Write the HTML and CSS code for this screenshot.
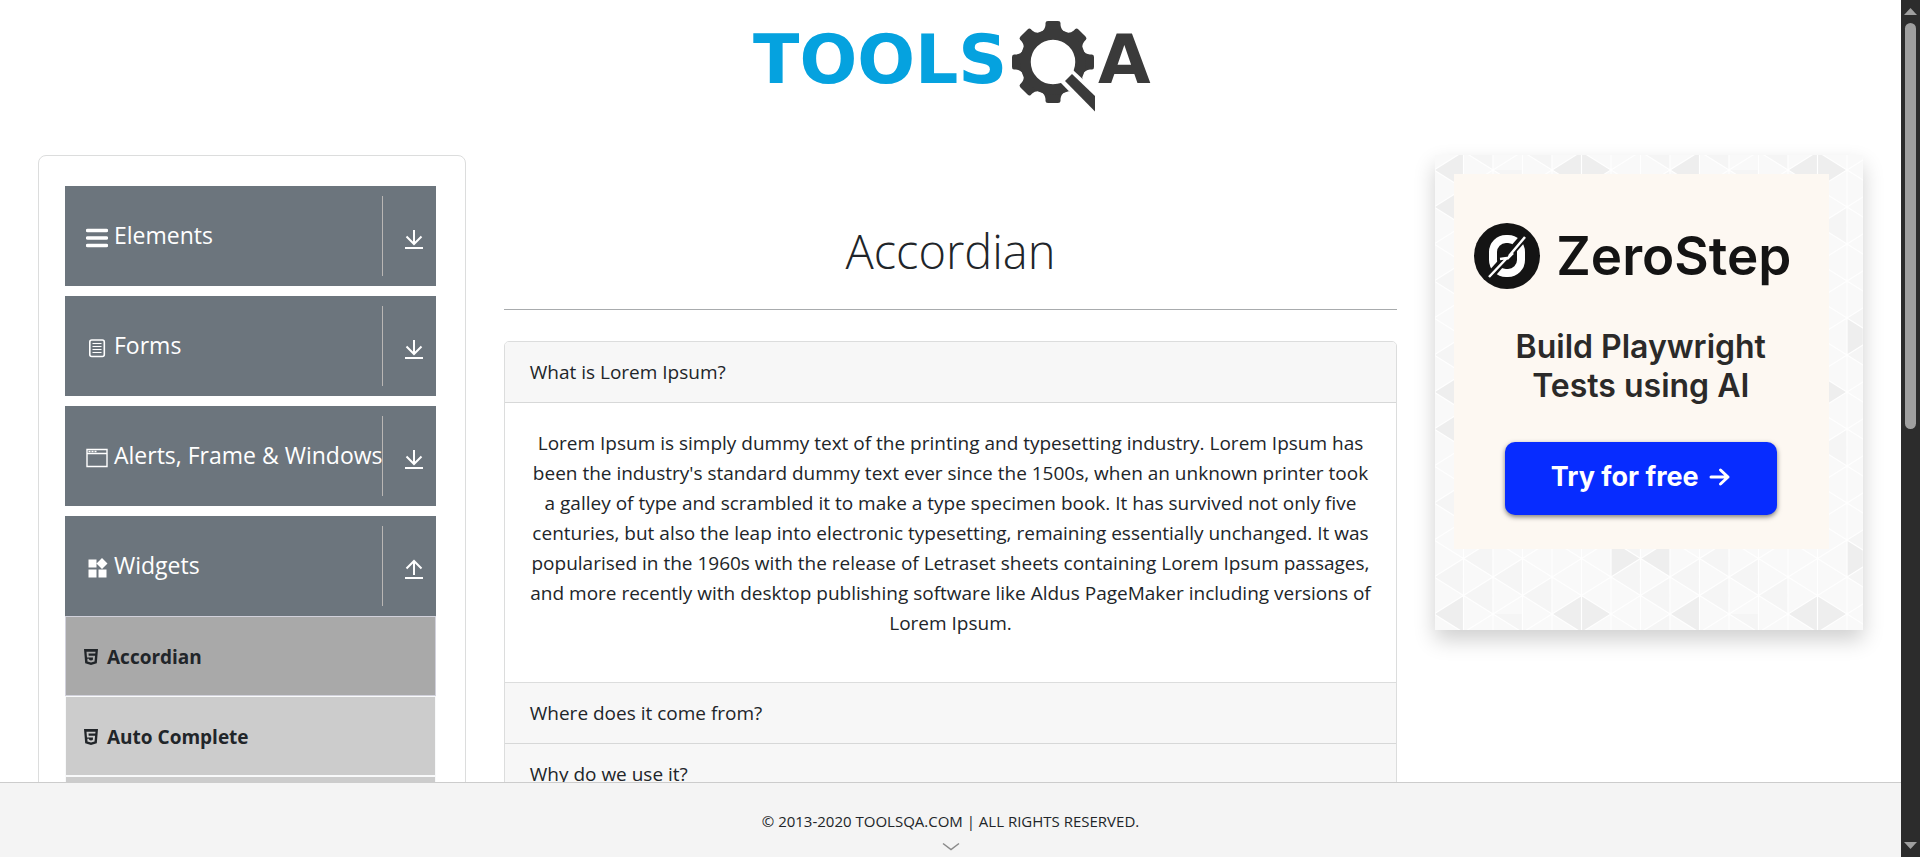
FILE: index.html
```html
<!DOCTYPE html>
<html lang="en">
<head>
<meta charset="utf-8">
<title>DEMOQA</title>
<link rel="stylesheet" href="styles.css">
</head>
<body>
<svg class="sprite" aria-hidden="true">
  <symbol id="down" viewBox="0 0 20 20"><path d="M10 1v14M2.500 7.500l7.500 7.500 7.500-7.500M1 19h18" fill="none" stroke="currentColor" stroke-width="2"/></symbol>
  <symbol id="up" viewBox="0 0 20 20"><path d="M10 16V2M2.500 9.500l7.500-7.500 7.500 7.500M1 19h18" fill="none" stroke="currentColor" stroke-width="2"/></symbol>
  <symbol id="html5" viewBox="0 0 14 16"><path fill="currentColor" fill-rule="evenodd" d="M0 0h14l-1.200 14.200L7 16l-5.800-1.800zM2.500 2.800l.5 5.700h6l-.2 2.500-1.800.6-1.800-.6-.1-1.200H3.300l.2 2.600L7 13.500l3.500-1.100.6-5.700H4.700l-.2-2.100h6.800l.2-1.800z"/></symbol>
</svg>

<header class="header">
  <a href="#" class="logo" aria-label="ToolsQA">
    <svg width="405" height="95" viewBox="0 0 405 95">
      <text class="logo-tools" x="5" y="63">TOOLS</text>
      <g fill="#3a3a3a">
        <g transform="translate(305 42)">
          <path id="tooth" d="M-12-30Q-8-32-7.500-37V-39Q-7.500-41-5-41H5Q7.500-41 7.500-39V-37Q8-32 12-30z"/>
          <use href="#tooth" transform="rotate(45)"/><use href="#tooth" transform="rotate(90)"/>
          <use href="#tooth" transform="rotate(135)"/><use href="#tooth" transform="rotate(180)"/>
          <use href="#tooth" transform="rotate(225)"/><use href="#tooth" transform="rotate(270)"/>
          <use href="#tooth" transform="rotate(315)"/>
          <circle r="27.500" fill="none" stroke="#3a3a3a" stroke-width="10.500"/>
        </g>
        <path fill="#fff" d="M325 50l30 28v20h-8L312 62z"/>
        <path d="M324 54l23 22v15.500L317 61z"/>
      </g>
      <text class="logo-a" x="350" y="63">A</text>
    </svg>
  </a>
</header>

<div class="page">
  <nav class="sidebar">
    <button class="group" type="button">
      <svg class="group-icon" viewBox="0 0 22 22"><path d="M1.500 3.500h19M1.500 11h19M1.500 18.500h19" stroke="currentColor" stroke-width="3.500" stroke-linecap="round"/></svg>
      <span class="group-name">Elements</span>
      <span class="group-toggle"><svg width="20" height="20"><use href="#down"/></svg></span>
    </button>
    <button class="group" type="button">
      <svg class="group-icon" viewBox="0 0 22 22"><rect x="3.800" y="3" width="14.500" height="16.500" rx="2" fill="none" stroke="currentColor" stroke-width="1.600"/><path d="M6.500 6.500h9M6.500 9.500h9M6.500 12.500h9M6.500 15.500h9" stroke="currentColor"/></svg>
      <span class="group-name">Forms</span>
      <span class="group-toggle"><svg width="20" height="20"><use href="#down"/></svg></span>
    </button>
    <button class="group" type="button">
      <svg class="group-icon" viewBox="0 0 22 22"><path d="M1 2.500h20v17H1zM1 6.500h20" fill="none" stroke="currentColor" stroke-width="1.400"/><path d="M2.500 4.500h2M5.500 4.500h2M8.500 4.500h2" stroke="currentColor" stroke-width="1.500"/></svg>
      <span class="group-name">Alerts, Frame &amp; Windows</span>
      <span class="group-toggle"><svg width="20" height="20"><use href="#down"/></svg></span>
    </button>
    <button class="group" type="button" aria-expanded="true">
      <svg class="group-icon" viewBox="0 0 22 22"><path d="M2.500 2.500h8v8h-8zM2.500 12.500h8v8h-8zM12.500 12.500h8v8h-8zM16 1l5.500 5.500L16 12l-5.500-5.500z" fill="currentColor"/></svg>
      <span class="group-name">Widgets</span>
      <span class="group-toggle"><svg width="20" height="20"><use href="#up"/></svg></span>
    </button>
    <ul class="items">
      <li><a class="item item-active" href="#"><svg width="14" height="16"><use href="#html5"/></svg>Accordian</a></li>
      <li><a class="item" href="#"><svg width="14" height="16"><use href="#html5"/></svg>Auto Complete</a></li>
      <li><a class="item" href="#"><svg width="14" height="16"><use href="#html5"/></svg>Date Picker</a></li>
    </ul>
  </nav>

  <main class="content">
    <h1 class="title">Accordian</h1>
    <hr class="rule">
    <div class="accordion">
      <button class="question" type="button" aria-expanded="true">What is Lorem Ipsum?</button>
      <div class="answer">
        <p>Lorem Ipsum is simply dummy text of the printing and typesetting industry. Lorem Ipsum has been the industry's standard dummy text ever since the 1500s, when an unknown printer took a galley of type and scrambled it to make a type specimen book. It has survived not only five centuries, but also the leap into electronic typesetting, remaining essentially unchanged. It was popularised in the 1960s with the release of Letraset sheets containing Lorem Ipsum passages, and more recently with desktop publishing software like Aldus PageMaker including versions of Lorem Ipsum.</p>
      </div>
      <button class="question" type="button">Where does it come from?</button>
      <button class="question" type="button">Why do we use it?</button>
    </div>
  </main>

  <aside class="promo">
    <svg class="promo-pattern" aria-hidden="true">
      <defs>
        <pattern id="mesh" width="236" height="222" patternUnits="userSpaceOnUse" patternTransform="translate(-1 15)">
          <rect width="236" height="222" fill="#f9f9f9"/>
          <g fill="#f5f5f5">
            <path d="M59 0l29.500-18.500v37zM206.500 18.500L236 0v37zM0 37l29.500-18.500v37zM88.500 55.500L118 37v37zM147.500 55.500L177 37v37zM0 111l29.500-18.500v37zM59 111l29.500 18.500v-37zM118 111l29.500-18.500v37zM206.500 92.500L236 74v37zM29.500 166.500L59 148v37zM177 148l29.500-18.500v37zM0 185l29.500 18.500v-37zM59 185l29.500-18.500v37zM177 185l29.500-18.500v37zM88.500 203.500L118 185v37zM206.500 203.500L236 185v37zM29.500 203.500L59 222v-37z"/>
          </g>
          <g fill="#eee">
            <path d="M0 0l29.500-18.500v37zM118 0l29.500-18.500L177 0l-29.500 18.500zM0 37l29.500-18.500v37z"/>
            <path d="M0 222l29.500-18.500V240zM118 222l29.500-18.500L177 222zM177 148v37l29.500-18.500zM206.500 166.500L236 148v37z"/>
          </g>
          <path fill="none" stroke="#fff" stroke-width="1.200" d="M0 0v222M29.500 0v222M59 0v222M88.500 0v222M118 0v222M147.500 0v222M177 0v222M206.500 0v222M236 0v222M0 0l236 148M0 37l236 148M0 74l236 148M0 111l177 111M0 148l118 74M0 185l59 37M59 0l177 111M118 0l118 74M177 0l59 37M236 0L0 148M236 37L0 185M236 74L0 222M236 111L59 222M236 148l-118 74M236 185l-59 37M177 0L0 111M118 0L0 74M59 0L0 37"/>
        </pattern>
      </defs>
      <rect width="100%" height="100%" fill="url(#mesh)"/>
    </svg>
    <div class="promo-card">
      <div class="promo-brand">
        <svg width="66" height="66" viewBox="0 0 66 66">
          <circle cx="33" cy="33" r="33" fill="#141414"/>
          <rect x="19" y="16" width="28" height="34" rx="13" fill="none" stroke="#fff" stroke-width="8"/>
          <path d="M15 54L51 13" stroke="#141414" stroke-width="8"/>
          <path d="M15 54l18-19M33 35l-7 1M35 33l16-19M33 36l6-6" stroke="#fff" stroke-width="2.500"/>
        </svg>
        <span>ZeroStep</span>
      </div>
      <p class="promo-text">Build Playwright<br>Tests using AI</p>
      <a class="promo-link" href="#">Try for free
        <svg width="22" height="20" viewBox="0 0 22 20"><path d="M2 10h17M11.500 3l7.500 7-7.500 7" fill="none" stroke="currentColor" stroke-width="3" stroke-linecap="round" stroke-linejoin="round"/></svg>
      </a>
    </div>
  </aside>
</div>

<footer class="footer">
  <span>© 2013-2020 TOOLSQA.COM | ALL RIGHTS RESERVED.</span>
  <svg class="chevron" width="18" height="10" viewBox="0 0 18 10"><path d="M1 1.500l8 6 8-6" fill="none" stroke="#8a8a8a" stroke-width="1.500"/></svg>
</footer>

<div class="scrollbar" aria-hidden="true">
  <svg width="13" height="7" viewBox="0 0 13 7"><path d="M6.500 0L13 7H0z" fill="#9f9f9f"/></svg>
  <div class="track"><div class="thumb"></div></div>
  <svg width="13" height="7" viewBox="0 0 13 7"><path d="M0 0h13L6.500 7z" fill="#9f9f9f"/></svg>
</div>
</body>
</html>
```
FILE: styles.css
```css
* { box-sizing: border-box; }

html { height: 100%; overflow: hidden; }

body {
  height: 100%;
  margin: 0;
  padding-right: 19px;
  overflow: hidden;
  background: #fff;
  color: #212529;
  font: 19px/30px "Open Sans", "Noto Sans", sans-serif;
}

button { font: inherit; color: inherit; border: 0; cursor: pointer; }
svg { display: block; flex: none; }
.sprite { display: none; }

.header {
  display: flex;
  justify-content: center;
  padding: 20px 0 40px;
}
.logo-tools, .logo-a {
  font-family: "DejaVu Sans", sans-serif;
  font-weight: 700;
  font-size: 68px;
  fill: #05a2df;
}
.logo-a { fill: #3a3a3a; }

.page {
  display: grid;
  grid-template-columns: repeat(12, 1fr);
  gap: 38px;
  align-items: start;
  padding: 0 38px;
}

.sidebar {
  grid-column: span 3;
  padding: 30px 29px 30px 26px;
  border: 1px solid #dcdddd;
  border-radius: 8px;
}
.group {
  display: flex;
  align-items: center;
  width: 100%;
  height: 100px;
  padding: 0 0 0 21px;
  margin-bottom: 10px;
  background: #6c757d;
  color: #fff;
  font-size: 23px;
  text-align: left;
}
.group[aria-expanded="true"] { margin-bottom: 0; }
.group-icon { width: 22px; height: 22px; margin: 4px 6px 0 0; }
.group-name { flex: 1; min-width: 0; padding-bottom: 2px; white-space: nowrap; }
.group-toggle {
  display: flex;
  align-items: center;
  height: 80px;
  padding: 6px 12px 0 21px;
  border-left: 1px solid #b9b6b4;
}

.items { margin: 0; padding: 0; list-style: none; }
.item {
  display: flex;
  align-items: center;
  gap: 9px;
  height: 80px;
  padding: 2px 18px 0;
  border: 1px solid #f8f9fa;
  background: #ccc;
  color: #212529;
  font-weight: 700;
  text-decoration: none;
}
.item-active { background: #a9a9a9; border-color: #d1d1db; }

.content { grid-column: span 6; }
.title {
  margin: 66px 0 28px;
  font-size: 47px;
  line-height: 60px;
  font-weight: 300;
  text-align: center;
}
.rule { margin: 0 0 31px; border: 0; border-top: 1px solid #a8abad; }

.accordion {
  border: 1px solid #dcdddd;
  border-radius: 5px;
  overflow: hidden;
}
.question {
  display: block;
  width: 100%;
  height: 61px;
  padding: 0 25px;
  border-bottom: 1px solid #d7d8d8;
  background: #f7f7f7;
  text-align: left;
}
.answer {
  padding: 25px 25px 44px;
  border-bottom: 1px solid #dcdddd;
  text-align: center;
}
.answer p { margin: 0; }

.promo {
  grid-column: span 3;
  position: relative;
  padding: 19px 19px 81px;
  box-shadow: 0 10px 20px rgba(0, 0, 0, .19);
}
.promo-pattern {
  position: absolute;
  inset: 0;
  width: 100%;
  height: 100%;
}
.promo-card {
  position: relative;
  display: flex;
  flex-direction: column;
  align-items: center;
  max-width: 375px;
  padding: 49px 22px 34px 20px;
  background: #fdf8f2;
  color: #2b2a29;
  font-family: Inter, sans-serif;
}
.promo-brand {
  display: flex;
  align-items: center;
  align-self: flex-start;
  gap: 16px;
  color: #141414;
  font-size: 53px;
  line-height: 66px;
  font-weight: 600;
}
.promo-text {
  margin: 38px 0 37px;
  font-size: 32px;
  line-height: 39px;
  font-weight: 600;
  text-align: center;
}
.promo-link {
  display: flex;
  align-items: center;
  justify-content: center;
  gap: 10px;
  width: 272px;
  height: 73px;
  padding-bottom: 4px;
  border-radius: 10px;
  background: #072cff;
  box-shadow: 0 2px 5px rgba(0, 0, 0, .5);
  color: #fff;
  font-size: 27px;
  font-weight: 700;
  text-decoration: none;
}

.footer {
  position: fixed;
  left: 0;
  right: 19px;
  bottom: 0;
  display: flex;
  flex-direction: column;
  align-items: center;
  height: 75px;
  padding-top: 23px;
  border-top: 1px solid #ccc;
  background: #f4f4f4;
  font-size: 15px;
}
.chevron { margin-top: 6px; }

.scrollbar {
  position: fixed;
  top: 0;
  right: 0;
  bottom: 0;
  display: flex;
  flex-direction: column;
  align-items: center;
  gap: 8px;
  width: 19px;
  padding: 8px 0;
  background: #2c2c2c;
}
.track { flex: 1; }
.thumb { width: 11px; height: 50%; border-radius: 6px; background: #9f9f9f; }
```
